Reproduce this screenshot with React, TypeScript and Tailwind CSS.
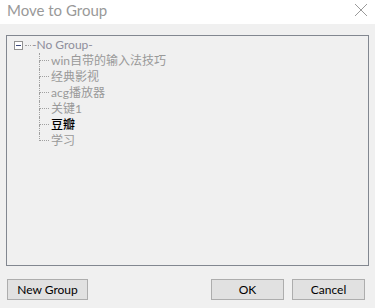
import React from 'react';

const groups = [
  { name: 'win自带的输入法技巧', dark: false },
  { name: '经典影视', dark: false },
  { name: 'acg播放器', dark: false },
  { name: '关键1', dark: false },
  { name: '豆瓣', dark: true },
  { name: '学习', dark: false },
];

const font = { fontFamily: 'Lato, "Noto Sans CJK SC", sans-serif' };

export default function App() {
  return (
    <div className="w-[375px] h-[308px] bg-[#f0f0f0] flex flex-col overflow-hidden" style={font}>
      {/* title bar */}
      <div className="h-[24px] bg-white flex items-start justify-between pl-[7px] pr-[7px] pt-[2px]">
        <span className="text-[15px] text-[#999999] leading-[16px]">Move to Group</span>
        <svg width="14" height="14" viewBox="0 0 14 14" className="mt-[1px]">
          <path d="M1 1 L13 13 M13 1 L1 13" stroke="#9a9a9a" strokeWidth="1" fill="none" />
        </svg>
      </div>

      {/* tree */}
      <div className="mt-[11px] mx-[6px] h-[231px] border border-[#828790] pt-[1px] pl-[7px]">
        <div className="h-[16px] flex items-center">
          <div className="w-[9px] h-[9px] border border-[#919191] bg-white flex items-center justify-center">
            <div className="w-[5px] h-[1px] bg-[#3c4a7c]" />
          </div>
          <div className="ml-[2px] w-[6px] border-t border-dotted border-[#a0a0a0]" />
          <span className="ml-[1px] text-[12px] leading-none text-[#8e8e9c]">-No Group-</span>
        </div>
        <div className="ml-[25px] flex flex-col">
          {groups.map((g, i) => (
            <div key={g.name} className="h-[16px] flex">
              <div className="w-[10px] flex flex-col">
                <div className="h-[8px] border-l border-b border-dotted border-[#a0a0a0]" />
                <div className={`h-[8px] ${i < groups.length - 1 ? 'border-l border-dotted border-[#a0a0a0]' : ''}`} />
              </div>
              <span
                className={`ml-[2px] text-[12px] leading-[16px] ${g.dark ? 'text-black font-medium' : 'text-[#999999]'}`}
              >
                {g.name}
              </span>
            </div>
          ))}
        </div>
      </div>

      {/* buttons */}
      <div className="mt-[13px] flex px-[7px]">
        <button className="w-[81px] h-[21px] bg-[#e1e1e1] border border-[#adadad] text-[12px] text-black leading-none">
          New Group
        </button>
        <div className="flex-1" />
        <button className="w-[73px] h-[21px] bg-[#e1e1e1] border border-[#adadad] text-[12px] text-black leading-none">
          OK
        </button>
        <button className="ml-[8px] mr-[3px] w-[73px] h-[21px] bg-[#e1e1e1] border border-[#adadad] text-[12px] text-black leading-none">
          Cancel
        </button>
      </div>
    </div>
  );
}
